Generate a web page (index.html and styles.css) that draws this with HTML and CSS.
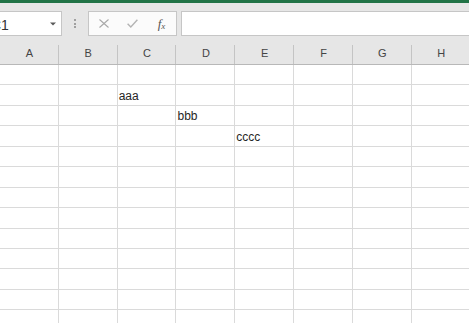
FILE: index.html
```html
<!DOCTYPE html>
<html>
<head>
<meta charset="utf-8">
<link rel="stylesheet" href="styles.css">
</head>
<body>
<div class="app">
  <div class="ribbon-edge"></div>
  <div class="toolbar">
    <div class="namebox">
      <span class="namebox-text">C1</span>
      <svg class="namebox-arrow" width="6" height="4" viewBox="0 0 6 4"><path d="M0 0.5H6L3 3.5Z" fill="#5a5a5a"/></svg>
    </div>
    <div class="grip"><i></i><i></i><i></i></div>
    <div class="fbuttons">
      <span class="fbtn">
        <svg width="10" height="9" viewBox="0 0 10 9"><path d="M0.5 0.5L9.5 8.5M9.5 0.5L0.5 8.5" stroke="#a8a8a8" stroke-width="1.1" fill="none"/></svg>
      </span>
      <span class="fbtn">
        <svg width="11" height="9" viewBox="0 0 11 9"><path d="M0.6 4.8L3.8 8L10.4 0.8" stroke="#b4b4b4" stroke-width="1.4" fill="none"/></svg>
      </span>
      <span class="fbtn fx"><i>f</i><span class="fx-x">x</span></span>
    </div>
    <div class="formula"></div>
  </div>
  <div class="colheads">
    <div class="colhead">A</div>
    <div class="colhead">B</div>
    <div class="colhead">C</div>
    <div class="colhead">D</div>
    <div class="colhead">E</div>
    <div class="colhead">F</div>
    <div class="colhead">G</div>
    <div class="colhead">H</div>
  </div>
  <div class="sheet">
    <div class="cell"></div><div class="cell"></div><div class="cell"></div><div class="cell"></div><div class="cell"></div><div class="cell"></div><div class="cell"></div><div class="cell"></div>
    <div class="cell"></div><div class="cell"></div><div class="cell">aaa</div><div class="cell"></div><div class="cell"></div><div class="cell"></div><div class="cell"></div><div class="cell"></div>
    <div class="cell"></div><div class="cell"></div><div class="cell"></div><div class="cell">bbb</div><div class="cell"></div><div class="cell"></div><div class="cell"></div><div class="cell"></div>
    <div class="cell"></div><div class="cell"></div><div class="cell"></div><div class="cell"></div><div class="cell">cccc</div><div class="cell"></div><div class="cell"></div><div class="cell"></div>
    <div class="cell"></div><div class="cell"></div><div class="cell"></div><div class="cell"></div><div class="cell"></div><div class="cell"></div><div class="cell"></div><div class="cell"></div>
    <div class="cell"></div><div class="cell"></div><div class="cell"></div><div class="cell"></div><div class="cell"></div><div class="cell"></div><div class="cell"></div><div class="cell"></div>
    <div class="cell"></div><div class="cell"></div><div class="cell"></div><div class="cell"></div><div class="cell"></div><div class="cell"></div><div class="cell"></div><div class="cell"></div>
    <div class="cell"></div><div class="cell"></div><div class="cell"></div><div class="cell"></div><div class="cell"></div><div class="cell"></div><div class="cell"></div><div class="cell"></div>
    <div class="cell"></div><div class="cell"></div><div class="cell"></div><div class="cell"></div><div class="cell"></div><div class="cell"></div><div class="cell"></div><div class="cell"></div>
    <div class="cell"></div><div class="cell"></div><div class="cell"></div><div class="cell"></div><div class="cell"></div><div class="cell"></div><div class="cell"></div><div class="cell"></div>
    <div class="cell"></div><div class="cell"></div><div class="cell"></div><div class="cell"></div><div class="cell"></div><div class="cell"></div><div class="cell"></div><div class="cell"></div>
    <div class="cell"></div><div class="cell"></div><div class="cell"></div><div class="cell"></div><div class="cell"></div><div class="cell"></div><div class="cell"></div><div class="cell"></div>
    <div class="cell"></div><div class="cell"></div><div class="cell"></div><div class="cell"></div><div class="cell"></div><div class="cell"></div><div class="cell"></div><div class="cell"></div>
  </div>
</div>
</body>
</html>
```

FILE: styles.css
```css
html, body {
  margin: 0;
  padding: 0;
  background: #ffffff;
}
body {
  width: 469px;
  height: 323px;
  overflow: hidden;
  font-family: "Liberation Sans", Arial, sans-serif;
}
.app {
  width: 469px;
  overflow: hidden;
}
.ribbon-edge {
  height: 3px;
  background: #217346;
}
.toolbar {
  display: flex;
  align-items: flex-start;
  height: 34px;
  box-sizing: border-box;
  padding-top: 8px;
  background: #e6e6e6;
}
.namebox {
  flex: none;
  display: flex;
  align-items: center;
  box-sizing: border-box;
  width: 92px;
  height: 25px;
  margin-left: -30px;
  padding-left: 20px;
  padding-right: 5px;
  background: #ffffff;
  border: 1px solid #c6c6c6;
}
.namebox-text {
  flex: 1;
  font-size: 14px;
  color: #333333;
  padding-top: 3px;
}
.namebox-arrow {
  display: block;
  margin-top: 0px;
}
.grip {
  flex: none;
  display: flex;
  flex-direction: column;
  gap: 1.5px;
  margin-left: 12px;
  margin-top: 8px;
}
.grip i {
  display: block;
  width: 2px;
  height: 2px;
  background: #a0a0a0;
}
.fbuttons {
  flex: none;
  display: flex;
  box-sizing: border-box;
  width: 89px;
  height: 25px;
  margin-left: 12px;
  background: #fbfbfb;
  border: 1px solid #c6c6c6;
}
.fbtn {
  width: 29px;
  display: flex;
  align-items: center;
  justify-content: center;
}
.fbtn svg {
  display: block;
}
.fx {
  font-family: "Liberation Serif", serif;
  color: #555555;
  font-size: 13px;
  padding-top: 1px;
}
.fx i {
  font-style: italic;
}
.fx-x {
  font-style: italic;
  font-size: 9px;
  margin-left: 0px;
  padding-top: 4px;
}
.formula {
  flex: none;
  width: 300px;
  height: 25px;
  box-sizing: border-box;
  margin-left: 4px;
  background: #ffffff;
  border: 1px solid #c6c6c6;
}
.colheads {
  display: grid;
  grid-template-columns: repeat(8, 58.83px);
  background: #e6e6e6;
  border-bottom: 1px solid #b8b8b8;
}
.colhead {
  height: 27px;
  box-sizing: border-box;
  padding-top: 10px;
  text-align: center;
  font-size: 11px;
  line-height: 13px;
  color: #444444;
  background: linear-gradient(#c4c4c4, #c4c4c4) right bottom / 1px 19px no-repeat;
}
.sheet {
  display: grid;
  grid-template-columns: repeat(8, 58.83px);
  grid-auto-rows: 20.45px;
}
.cell {
  box-sizing: border-box;
  border-right: 1px solid #dadada;
  border-bottom: 1px solid #dadada;
  display: flex;
  align-items: flex-end;
  padding-left: 1px;
  padding-bottom: 2px;
  font-size: 12px;
  line-height: 14px;
  color: #262626;
  white-space: nowrap;
}
```
